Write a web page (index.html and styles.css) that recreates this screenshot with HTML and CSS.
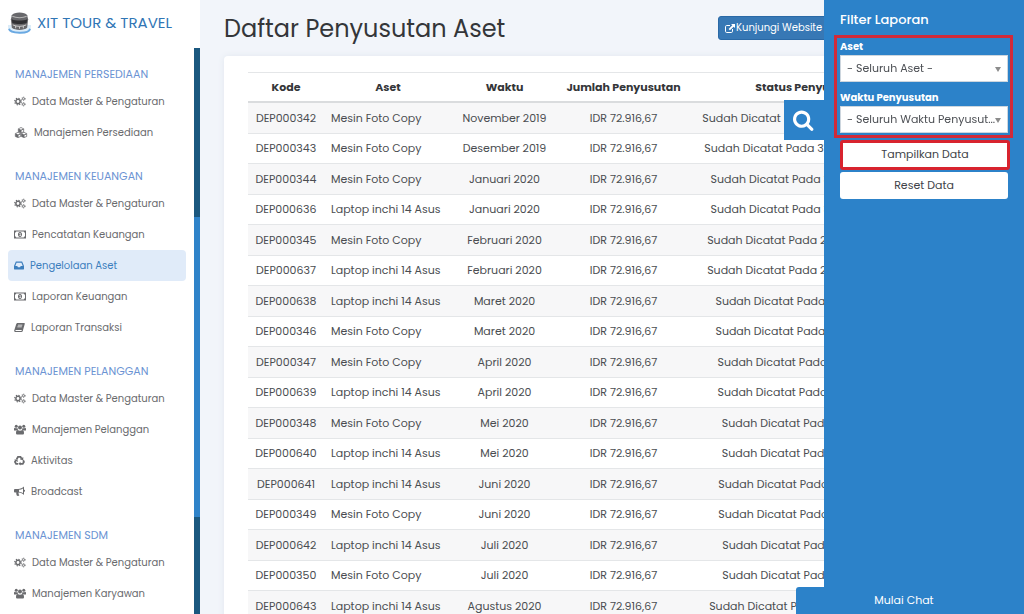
FILE: index.html
```html
<!DOCTYPE html>
<html lang="id">
<head>
<meta charset="utf-8">
<meta name="viewport" content="width=device-width, initial-scale=1">
<title>Daftar Penyusutan Aset</title>
<link rel="stylesheet" href="styles.css">
</head>
<body>
<svg class="sprite" aria-hidden="true">
  <symbol id="cogs" viewBox="0 0 24 20">
    <g fill="none" stroke="currentColor">
      <circle cx="8" cy="10" r="4.3" stroke-width="3"/>
      <circle cx="8" cy="10" r="6.6" stroke-width="2.4" stroke-dasharray="2.6 2.584"/>
      <circle cx="19" cy="4.5" r="2.1" stroke-width="1.7"/>
      <circle cx="19" cy="4.5" r="3.5" stroke-width="1.5" stroke-dasharray="1.8 1.865"/>
      <circle cx="19" cy="15.5" r="2.1" stroke-width="1.7"/>
      <circle cx="19" cy="15.5" r="3.5" stroke-width="1.5" stroke-dasharray="1.8 1.865"/>
    </g>
  </symbol>
  <symbol id="cubes" viewBox="0 0 26 22">
    <g fill="currentColor" stroke="currentColor" stroke-linejoin="round">
      <path d="M13 1l5.500 2.500v6L13 12 7.500 9.500v-6zM7 10.500l5.500 2.500v6L7 21.500 1.500 19v-6zM19 10.500l5.500 2.500v6L19 21.500 13.500 19v-6z"/>
    </g>
    <g fill="#fff"><path d="M13 2l4 1.700-4 1.800-4-1.800zM7 11.500l4 1.700L7 15l-4-1.800zM19 11.500l4 1.700-4 1.800-4-1.800zM14 7l3.500-1.600V9L14 10.600zM8 16.500l3.500-1.600v3.600L8 20.100zM20 16.500l3.500-1.600v3.600L20 20.100z"/></g>
  </symbol>
  <symbol id="money" viewBox="0 0 24 16">
    <path fill="currentColor" fill-rule="evenodd" d="M0 0h24v16H0zM4.500 2A3 3 0 0 1 2 4.500v7A3 3 0 0 1 4.500 14h15a3 3 0 0 1 2.500-2.500v-7A3 3 0 0 1 19.500 2zM12 3c2.600 0 4 2.300 4 5s-1.400 5-4 5-4-2.300-4-5 1.400-5 4-5zm-1.600 3 .8 1 .5-.4V10h-1.300v1.200h3.800V10H13V5h-1.200z"/>
  </symbol>
  <symbol id="inbox" viewBox="0 0 20 18">
    <path fill="currentColor" fill-rule="evenodd" d="M4.500 1h11c.6 0 1 .3 1.200.8L20 10v6c0 .6-.4 1-1 1H1c-.6 0-1-.4-1-1v-6l3.300-8.200C3.500 1.300 3.900 1 4.500 1zm.6 2.500L2.600 10h4l1.200 2.500h4.400l1.200-2.500h4l-2.500-6.500z"/>
  </symbol>
  <symbol id="book" viewBox="0 0 22 20">
    <path fill="currentColor" fill-rule="evenodd" d="M7.500 1H20c1.200 0 1.900 1 1.500 2.200l-4 13.800c-.3 1.200-1.300 2-2.500 2H3c-1.700 0-3-1.500-2.600-3.200L4.500 3.200C4.900 1.900 6.100 1 7.500 1zM8 4.500 7.600 6h8.800l.4-1.500zM7 8l-.4 1.500h8.800l.4-1.500zM3 15c-.5 1 0 1.800.9 1.800h10.500c.5 0 .9-.3 1-.8l.4-1z"/>
  </symbol>
  <symbol id="users" viewBox="0 0 24 20">
    <g fill="currentColor">
      <circle cx="4.500" cy="3.500" r="3"/><circle cx="19.500" cy="3.500" r="3"/><circle cx="12" cy="6" r="4"/>
      <path d="M0 12V9c0-2 1-2.500 2-2.500.8 1 3 1.500 5 .7.100 1.500.6 2.600 1.400 3.400-1.500 0-2.800.6-3.600 1.400H2c-1.200 0-2 0-2 0zM24 12V9c0-2-1-2.500-2-2.500-.8 1-3 1.500-5 .7-.1 1.500-.6 2.600-1.400 3.400 1.500 0 2.800.6 3.600 1.400z"/>
      <path d="M4 17c0-3.800 1.200-5.800 3.600-5.800 2.400 1.800 6.400 1.800 8.800 0 2.400 0 3.600 2 3.600 5.800 0 2-1 3-3 3H7c-2 0-3-1-3-3z"/>
    </g>
  </symbol>
  <symbol id="recycle" viewBox="0 0 22 20">
    <g fill="none" stroke="currentColor" stroke-width="3.600">
      <path d="M5.300 7.500 8 2.800h5l2.300 3.700M18.300 9.500l1.500 3.200-2.300 4.100H12M8.500 16.800H4.200L2 12.700l2-3"/>
    </g>
    <path fill="currentColor" d="M18.500 3v6.500L12 8zM13 12.500V20l-4-3.500zM0 8.500l6.500-1.200L8 13z"/>
  </symbol>
  <symbol id="horn" viewBox="0 0 22 20">
    <path fill="currentColor" fill-rule="evenodd" d="M20 0v6.500c1.200 0 2 .8 2 1.900 0 1.100-.8 1.900-2 1.900V17c-2.800-2.700-6.500-4.500-10.500-4.800-1 .8-.6 1.600 0 2.300-.5 1 .2 1.700 1.300 2.800-.9 1.800-3.800 2-5.300.8-.5-2-1.400-3.700-.8-6H2.200C1 12.100 0 11.200 0 10V7c0-1.200 1-2.200 2.200-2.200h6C12.700 4.800 17 2.900 20 0zm-2 4c-2.400 1.600-5 2.500-8 2.700v3.600c3 .2 5.600 1.200 8 2.700z"/>
  </symbol>
</svg>

<div class="app">
  <aside class="sidebar">
    <a class="brand" href="#">
      <svg class="brand-logo" viewBox="0 0 24 24" aria-hidden="true">
        <path d="M0 16c0 9 24 9 24 0v-2H0z" fill="#dcecf8"/>
        <path d="M1 18c1 5 21 6 22 0" fill="none" stroke="#6aa9e2" stroke-width="2"/>
        <path d="M4 4c2-4 14-4 16 0l1 4-1 9c-3 3-13 3-16 0L3 8z" fill="#68686b"/>
        <path d="M4.500 5c4 2 11 2 15 0" stroke="#b5b5b5" stroke-width="1.200" fill="none"/>
        <path d="M4 8c4 2 12 2 16 0l-.5 4c-4 1.500-11 1.500-15 0z" fill="#303033"/>
        <path d="M5 14c4 2 10 2 14 0M8 15v2.500M12 15.500V18M16 15v2.500" stroke="#cfcfcf" stroke-width="1" fill="none"/>
      </svg>
      <span>XIT TOUR &amp; TRAVEL</span>
    </a>
    <div class="sidebar-body">
      <nav class="menu" aria-label="Menu utama">
        <section>
          <h2>MANAJEMEN PERSEDIAAN</h2>
          <a href="#"><svg class="w12"><use href="#cogs"/></svg>Data Master &amp; Pengaturan</a>
          <a href="#"><svg class="w14"><use href="#cubes"/></svg>Manajemen Persediaan</a>
        </section>
        <section>
          <h2>MANAJEMEN KEUANGAN</h2>
          <a href="#"><svg class="w12"><use href="#cogs"/></svg>Data Master &amp; Pengaturan</a>
          <a href="#"><svg class="w12"><use href="#money"/></svg>Pencatatan Keuangan</a>
          <a href="#" class="active" aria-current="page"><svg class="w10"><use href="#inbox"/></svg>Pengelolaan Aset</a>
          <a href="#"><svg class="w12"><use href="#money"/></svg>Laporan Keuangan</a>
          <a href="#"><svg class="w11"><use href="#book"/></svg>Laporan Transaksi</a>
        </section>
        <section>
          <h2>MANAJEMEN PELANGGAN</h2>
          <a href="#"><svg class="w12"><use href="#cogs"/></svg>Data Master &amp; Pengaturan</a>
          <a href="#"><svg class="w12"><use href="#users"/></svg>Manajemen Pelanggan</a>
          <a href="#"><svg class="w11"><use href="#recycle"/></svg>Aktivitas</a>
          <a href="#"><svg class="w11"><use href="#horn"/></svg>Broadcast</a>
        </section>
        <section>
          <h2>MANAJEMEN SDM</h2>
          <a href="#"><svg class="w12"><use href="#cogs"/></svg>Data Master &amp; Pengaturan</a>
          <a href="#"><svg class="w12"><use href="#users"/></svg>Manajemen Karyawan</a>
        </section>
      </nav>
      <div class="track"><div class="thumb"></div></div>
    </div>
  </aside>

  <main class="content">
    <header class="page-head">
      <h1>Daftar Penyusutan Aset</h1>
      <a class="visit" href="#">
        <svg viewBox="0 0 20 18" aria-hidden="true"><path d="M15 10v4.500a2.500 2.500 0 0 1-2.500 2.500h-9A2.500 2.500 0 0 1 1 14.500v-9A2.500 2.500 0 0 1 3.500 3H10" fill="none" stroke="currentColor" stroke-width="2"/><path d="M12 0h8v8l-2.700-2.700-7.500 7.400-2.500-2.500 7.400-7.500z" fill="currentColor"/></svg>
        Kunjungi Website
      </a>
    </header>
    <div class="card">
      <table>
        <colgroup><col class="c-code"><col class="c-asset"><col class="c-time"><col class="c-sum"><col class="c-status"><col></colgroup>
        <thead><tr><th>Kode</th><th>Aset</th><th>Waktu</th><th>Jumlah Penyusutan</th><th>Status Penyusutan</th><th></th></tr></thead>
        <tbody>
          <tr><td>DEP000342</td><td>Mesin Foto Copy</td><td>November 2019</td><td>IDR 72.916,67</td><td>Sudah Dicatat Pada 30 November 2019</td><td></td></tr>
          <tr><td>DEP000343</td><td>Mesin Foto Copy</td><td>Desember 2019</td><td>IDR 72.916,67</td><td>Sudah Dicatat Pada 31 Desember 2019</td><td></td></tr>
          <tr><td>DEP000344</td><td>Mesin Foto Copy</td><td>Januari 2020</td><td>IDR 72.916,67</td><td>Sudah Dicatat Pada 31 Januari 2020</td><td></td></tr>
          <tr><td>DEP000636</td><td>Laptop inchi 14 Asus</td><td>Januari 2020</td><td>IDR 72.916,67</td><td>Sudah Dicatat Pada 31 Januari 2020</td><td></td></tr>
          <tr><td>DEP000345</td><td>Mesin Foto Copy</td><td>Februari 2020</td><td>IDR 72.916,67</td><td>Sudah Dicatat Pada 29 Februari 2020</td><td></td></tr>
          <tr><td>DEP000637</td><td>Laptop inchi 14 Asus</td><td>Februari 2020</td><td>IDR 72.916,67</td><td>Sudah Dicatat Pada 29 Februari 2020</td><td></td></tr>
          <tr><td>DEP000638</td><td>Laptop inchi 14 Asus</td><td>Maret 2020</td><td>IDR 72.916,67</td><td>Sudah Dicatat Pada 31 Maret 2020</td><td></td></tr>
          <tr><td>DEP000346</td><td>Mesin Foto Copy</td><td>Maret 2020</td><td>IDR 72.916,67</td><td>Sudah Dicatat Pada 31 Maret 2020</td><td></td></tr>
          <tr><td>DEP000347</td><td>Mesin Foto Copy</td><td>April 2020</td><td>IDR 72.916,67</td><td>Sudah Dicatat Pada 30 April 2020</td><td></td></tr>
          <tr><td>DEP000639</td><td>Laptop inchi 14 Asus</td><td>April 2020</td><td>IDR 72.916,67</td><td>Sudah Dicatat Pada 30 April 2020</td><td></td></tr>
          <tr><td>DEP000348</td><td>Mesin Foto Copy</td><td>Mei 2020</td><td>IDR 72.916,67</td><td>Sudah Dicatat Pada 31 Mei 2020</td><td></td></tr>
          <tr><td>DEP000640</td><td>Laptop inchi 14 Asus</td><td>Mei 2020</td><td>IDR 72.916,67</td><td>Sudah Dicatat Pada 31 Mei 2020</td><td></td></tr>
          <tr><td>DEP000641</td><td>Laptop inchi 14 Asus</td><td>Juni 2020</td><td>IDR 72.916,67</td><td>Sudah Dicatat Pada 30 Juni 2020</td><td></td></tr>
          <tr><td>DEP000349</td><td>Mesin Foto Copy</td><td>Juni 2020</td><td>IDR 72.916,67</td><td>Sudah Dicatat Pada 30 Juni 2020</td><td></td></tr>
          <tr><td>DEP000642</td><td>Laptop inchi 14 Asus</td><td>Juli 2020</td><td>IDR 72.916,67</td><td>Sudah Dicatat Pada 31 Juli 2020</td><td></td></tr>
          <tr><td>DEP000350</td><td>Mesin Foto Copy</td><td>Juli 2020</td><td>IDR 72.916,67</td><td>Sudah Dicatat Pada 31 Juli 2020</td><td></td></tr>
          <tr><td>DEP000643</td><td>Laptop inchi 14 Asus</td><td>Agustus 2020</td><td>IDR 72.916,67</td><td>Sudah Dicatat Pada 31 Agustus 2020</td><td></td></tr>
        </tbody>
      </table>
    </div>
  </main>
</div>

<aside class="filter">
  <button class="filter-toggle" type="button" aria-label="Cari">
    <svg viewBox="0 0 1792 1792" aria-hidden="true"><path fill="currentColor" d="M1152 832q0-185-131.500-316.500t-316.500-131.500-316.500 131.500-131.500 316.500 131.500 316.500 316.500 131.500 316.500-131.500 131.500-316.500zm512 832q0 52-38 90t-90 38q-54 0-90-38l-343-342q-179 124-399 124-143 0-273.500-55.500t-225-150-150-225-55.500-273.500 55.500-273.500 150-225 225-150 273.500-55.500 273.500 55.500 225 150 150 225 55.500 273.500q0 220-124 399l343 343q37 37 37 90z"/></svg>
  </button>
  <form class="filter-form">
    <h2>Filter Laporan</h2>
    <div class="fields">
      <label for="aset">Aset</label>
      <div class="pick"><select id="aset"><option>- Seluruh Aset -</option></select></div>
      <label for="waktu">Waktu Penyusutan</label>
      <div class="pick"><select id="waktu"><option>- Seluruh Waktu Penyusut...</option></select></div>
    </div>
    <button class="btn marked" type="button">Tampilkan Data</button>
    <button class="btn" type="reset">Reset Data</button>
  </form>
</aside>
<button class="chat" type="button">Mulai Chat</button>
</body>
</html>
```

FILE: styles.css
```css
* { box-sizing: border-box; }

body {
  margin: 0;
  height: 100vh;
  overflow: hidden;
  font-family: Poppins, Inter, "Open Sans", sans-serif;
  font-size: 11px;
  color: #4a4d51;
  background: #f2f5fa;
}

a { color: inherit; text-decoration: none; }
button, select { font: inherit; }
h1, h2 { margin: 0; font-weight: 400; }
.sprite { display: none; }

.app { display: flex; height: 100%; }

.sidebar {
  flex: 0 0 200px;
  display: flex;
  flex-direction: column;
  background: #fff;
}

.brand {
  display: flex;
  align-items: center;
  gap: 6px;
  height: 48px;
  padding: 0 8px 3px;
  font-size: 15px;
  white-space: nowrap;
  color: #3176b5;
}
.brand-logo { width: 23px; height: 24px; }

.sidebar-body { flex: 1; min-height: 0; display: flex; }
.menu { flex: 1; padding: 14px 8px 0; overflow: hidden; }
.menu section { margin-bottom: 16px; }
.menu h2 {
  padding-left: 7px;
  font-size: 11px;
  line-height: 24px;
  color: #6b93d3;
}
.menu a {
  display: flex;
  align-items: center;
  gap: 6px;
  height: 31px;
  padding-left: 6px;
  border-radius: 4px;
  font-size: 10px;
  color: #6a6b6e;
}
.menu .active { background: #e0ebf9; color: #3c7ebd; }
.menu svg { height: 11px; flex: none; }
.w10 { width: 10px; }
.w11 { width: 11px; }
.w12 { width: 12px; }
.w14 { width: 14px; }

.track { width: 6px; background: #1b587f; }
.thumb { height: 53%; margin-top: 169px; background: #2f83c9; }

.content { flex: 1; min-width: 0; padding: 0 24px; }
.page-head {
  display: flex;
  align-items: center;
  justify-content: space-between;
  height: 56px;
}
.page-head h1 { font-size: 24px; color: #343639; }
.visit {
  display: flex;
  align-items: center;
  gap: 1px;
  flex: none;
  width: 282px;
  height: 24px;
  padding-left: 6px;
  border: 1px solid #2a69a6;
  border-radius: 3px;
  background: #3778b5;
  color: #fff;
  font-size: 10px;
}
.visit svg { width: 10px; height: 9px; }

.card {
  padding: 16px 24px;
  border-radius: 4px;
  background: #fff;
  box-shadow: 0 0 6px #e1e7ef;
}

table { width: 100%; table-layout: fixed; border-collapse: separate; border-spacing: 0; }
.c-code { width: 76px; }
.c-asset { width: 128px; }
.c-time { width: 105px; }
.c-sum { width: 133px; }
.c-status { width: 238px; }
th, td { padding: 6px 0; text-align: center; white-space: nowrap; }
th {
  line-height: 16px;
  font-weight: 700;
  color: #343639;
  border-top: 1px solid #e4e6e8;
  border-bottom: 2px solid #dadcde;
}
td { line-height: 18px; border-bottom: 1px solid #e4e6e8; }
tbody tr:nth-child(even) td { line-height: 17px; }
tbody tr:nth-child(odd) { background: #f7f7f8; }
td:nth-child(2) { padding-left: 7px; text-align: left; }

.filter {
  position: fixed;
  top: 0;
  right: 0;
  bottom: 0;
  width: 200px;
  background: #2c82c9;
  color: #fff;
}
.filter-toggle {
  position: absolute;
  top: 100px;
  right: 100%;
  display: grid;
  place-items: center;
  width: 40px;
  height: 40px;
  padding: 0;
  border: 0;
  background: #2c82c9;
  color: #fff;
}
.filter-toggle svg { width: 22px; height: 22px; }

.filter-form { display: flex; flex-direction: column; padding: 4px 14px 0 10px; }
.filter-form h2 { padding-left: 6px; font-size: 13px; font-weight: 500; line-height: 31px; }
.fields { margin-right: -3px; padding: 0 2px 2px 3px; border: 3px solid #d02a3a; }
.fields label { display: block; height: 17px; font-size: 10px; font-weight: 700; line-height: 17px; }
.pick { position: relative; }
.pick::after {
  content: "";
  position: absolute;
  top: 12px;
  right: 7px;
  border: 3px solid transparent;
  border-top: 5px solid #8c8c8c;
  border-bottom: 0;
  pointer-events: none;
}
.pick + label { margin-top: 7px; }
.pick select {
  display: block;
  width: 100%;
  height: 27px;
  padding: 0 10px 1px 6px;
  border: 1px solid #cdd6de;
  border-radius: 0;
  background: #fff;
  color: #4c4f54;
  appearance: none;
}
.btn {
  height: 27px;
  margin: 2px 2px 0 6px;
  padding: 0;
  border: 0;
  border-radius: 3px;
  background: #fff;
  color: #404348;
}
.btn.marked { height: 30px; margin-right: 0; padding-bottom: 1px; border: 3px solid #d8232f; }

.chat {
  position: fixed;
  right: 0;
  bottom: 0;
  width: 228px;
  height: 27px;
  padding: 0 12px 0 0;
  border: 0;
  border-radius: 3px 0 0 0;
  background: #2c82c9;
  color: #fff;
}
```
